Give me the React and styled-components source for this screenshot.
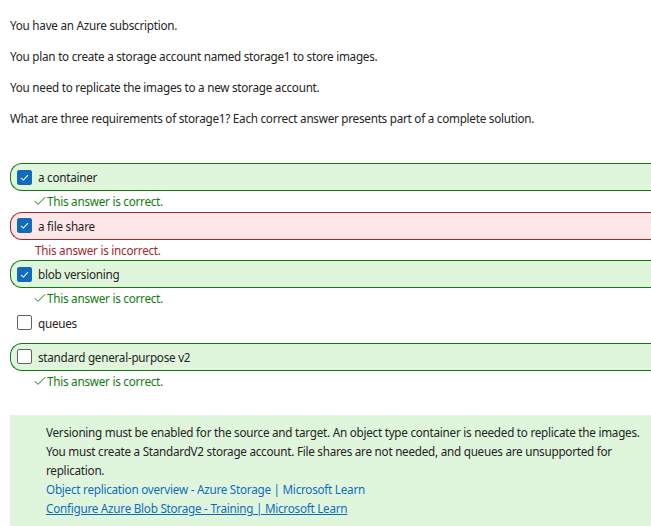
import React from "react";
import styled, { createGlobalStyle } from "styled-components";

const GlobalStyle = createGlobalStyle`
  html, body {
    margin: 0;
    padding: 0;
    background: #ffffff;
    overflow: hidden;
  }
  body {
    font-family: "Noto Sans", "Open Sans", sans-serif;
    font-size: 11.7px;
    letter-spacing: -0.25px;
    color: #242424;
  }
`;

const options = [
  { id: 1, label: "a container", checked: true, status: "correct" },
  { id: 2, label: "a file share", checked: true, status: "incorrect" },
  { id: 3, label: "blob versioning", checked: true, status: "correct" },
  { id: 4, label: "queues", checked: false, status: null },
  { id: 5, label: "standard general-purpose v2", checked: false, status: "correct" },
];

const Question = () => {
  return (
    <Wrapper>
      <GlobalStyle />
      <Prompt>
        <p>You have an Azure subscription.</p>
        <p>You plan to create a storage account named storage1 to store images.</p>
        <p>You need to replicate the images to a new storage account.</p>
        <p>
          What are three requirements of storage1? Each correct answer presents
          part of a complete solution.
        </p>
      </Prompt>

      <OptionList>
        {options.map((opt) => (
          <li key={opt.id}>
            <OptionBox status={opt.status}>
              <CheckBox checked={opt.checked}>
                {opt.checked && (
                  <svg width="11" height="11" viewBox="0 0 12 12">
                    <path
                      d="M2.2 6.3 L4.8 8.8 L9.8 3.4"
                      fill="none"
                      stroke="#ffffff"
                      strokeWidth="1.1"
                    />
                  </svg>
                )}
              </CheckBox>
              <span>{opt.label}</span>
            </OptionBox>
            {opt.status === "correct" && (
              <Feedback status="correct">
                <svg width="12" height="10" viewBox="0 0 12 10">
                  <path
                    d="M0.8 5.2 L4 8.4 L11.2 1.2"
                    fill="none"
                    stroke="#107c10"
                    strokeWidth="1"
                  />
                </svg>
                This answer is correct.
              </Feedback>
            )}
            {opt.status === "incorrect" && (
              <Feedback status="incorrect">This answer is incorrect.</Feedback>
            )}
          </li>
        ))}
      </OptionList>

      <Explanation>
        <p>
          Versioning must be enabled for the source and target. An object type
          container is needed to replicate the images. You must create a
          StandardV2 storage account. File shares are not needed, and queues are
          unsupported for replication.
        </p>
        <a href="#">Object replication overview - Azure Storage | Microsoft Learn</a>
        <a href="#" className="underline">
          Configure Azure Blob Storage - Training | Microsoft Learn
        </a>
      </Explanation>
    </Wrapper>
  );
};

const Wrapper = styled.main`
  padding: 16px 0 0 10px;
  width: 660px;
`;

const Prompt = styled.section`
  p {
    margin: 0 0 13px;
    line-height: 18px;
  }
`;

const OptionList = styled.ul`
  list-style: none;
  margin: 36px 0 0;
  padding: 0;
`;

const tones = {
  correct: { bg: "#dff6dd", border: "#107c10", text: "#107c10" },
  incorrect: { bg: "#fde7e9", border: "#a4262c", text: "#a4262c" },
};

const OptionBox = styled.div`
  display: flex;
  align-items: center;
  gap: 6px;
  box-sizing: border-box;
  height: 28px;
  padding-left: 6px;
  border-radius: 12px 0 0 12px;
  border: 1px solid ${({ status }) => (status ? tones[status].border : "transparent")};
  border-right: none;
  background: ${({ status }) => (status ? tones[status].bg : "transparent")};
  margin-bottom: ${({ status }) => (status ? "0" : "6px")};
`;

const CheckBox = styled.span`
  display: flex;
  align-items: center;
  justify-content: center;
  box-sizing: border-box;
  width: 15px;
  height: 15px;
  border-radius: 2px;
  background: ${({ checked }) => (checked ? "#0f6cbd" : "#ffffff")};
  border: 1px solid ${({ checked }) => (checked ? "#0f6cbd" : "#616161")};
`;

const Feedback = styled.div`
  display: flex;
  align-items: center;
  gap: 1px;
  height: 20.5px;
  padding-left: ${({ status }) => (status === "correct" ? "24px" : "25px")};
  color: ${({ status }) => tones[status].text};
`;

const Explanation = styled.section`
  margin-top: 24px;
  background: #dff6dd;
  padding: 8px 0 10px 36px;
  line-height: 19px;
  p {
    margin: 0;
    width: 600px;
  }
  a {
    display: block;
    color: #0f6cbd;
    text-decoration: none;
  }
  a.underline {
    text-decoration: underline;
  }
`;

export default Question;
